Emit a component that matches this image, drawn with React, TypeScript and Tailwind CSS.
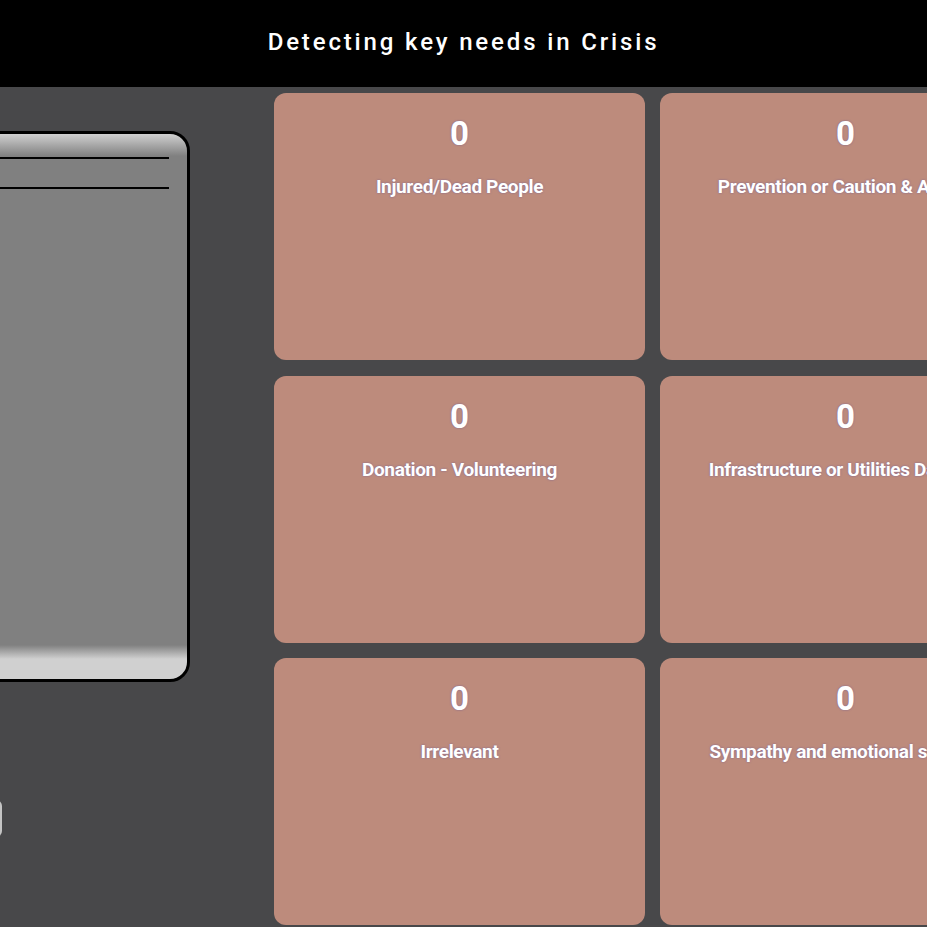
const categories = [
  "Injured/Dead People",
  "Prevention or Caution & Advice",
  "Donation - Volunteering",
  "Infrastructure or Utilities Damage",
  "Irrelevant",
  "Sympathy and emotional support",
];

const CategoryCard = ({ label, count }: { label: string; count: number }) => (
  <div className="h-[267px] rounded-[12px] bg-[#bd8b7c] flex flex-col items-center pt-[20px] overflow-hidden">
    <span className="text-[33px] leading-[42px] font-bold text-white [text-shadow:0_0_2px_rgba(90,80,160,0.7)]">
      {count}
    </span>
    <span className="mt-[20px] text-[19px] leading-[24px] font-bold tracking-[-0.35px] text-white whitespace-nowrap [text-shadow:0_0_2px_rgba(90,80,160,0.7)]">
      {label}
    </span>
  </div>
);

export default function App() {
  return (
    <div className="min-h-screen w-full overflow-hidden bg-[#48484a] font-['Roboto',sans-serif]">
      {/* Header */}
      <header className="h-[87px] bg-black flex items-center justify-center pb-[4px]">
        <h1 className="text-[24px] font-medium tracking-[2.85px] text-white">
          Detecting key needs in Crisis
        </h1>
      </header>

      {/* Content */}
      <main className="flex justify-center gap-[84px] pt-[6px]">
        <div className="w-[294px] shrink-0 flex flex-col pt-[38px]">
          <div className="h-[551px] rounded-[20px] border-[3px] border-black bg-[linear-gradient(to_bottom,#d0d0d0_0px,#808080_22px,#808080_calc(100%-34px),#d0d0d0_calc(100%-20px),#d0d0d0_100%)] flex flex-col">
            <div className="mt-[23px] mr-[18px] h-[2px] bg-black" />
            <div className="mt-[28px] mr-[18px] h-[2px] bg-black" />
          </div>
          <button className="mt-[118px] ml-[6px] h-[37px] w-[100px] rounded-[6px] bg-[#c4c4c4]" />
        </div>

        <div className="shrink-0 grid grid-cols-[371px_371px] gap-x-[15px] gap-y-[15.5px]">
          {categories.map((c) => (
            <CategoryCard key={c} label={c} count={0} />
          ))}
        </div>
      </main>
    </div>
  );
}
